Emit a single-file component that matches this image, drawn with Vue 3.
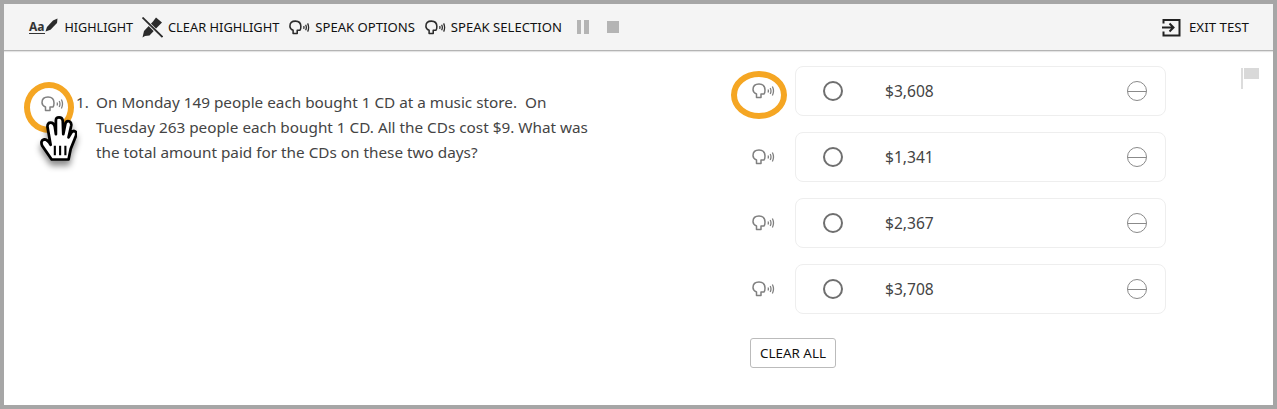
<script setup>
const tools = [
  { id: 'speak', label: 'SPEAK OPTIONS' },
  { id: 'speak', label: 'SPEAK SELECTION' },
]
const options = [
  { value: '$3,608', ring: true },
  { value: '$1,341' },
  { value: '$2,367' },
  { value: '$3,708' },
]
</script>

<template>
  <div class="frame">
    <header class="toolbar">
      <button class="tool tool-highlight">
        <span class="aa">Aa</span>
        <svg class="pen" width="13" height="15" viewBox="0 0 13 15">
          <path d="M0.5 13.5 L2 9 L8 2.5 L12.5 0.5 L12 5 L5.5 11.8 Z" fill="#2b2b2b" />
        </svg>
        HIGHLIGHT
      </button>
      <button class="tool tool-clear">
        <svg width="21" height="21" viewBox="0 0 21 21">
          <path d="M0.5 20.5 L2 14 L11 4.5 L14 0.5 L20 5.5 L16.5 9 L7.5 18.5 L3 19 Z" fill="#2b2b2b" />
          <path d="M1 1 L20 20" stroke="#f4f4f4" stroke-width="3.4" />
          <path d="M0.5 0.5 L20.5 20" stroke="#2b2b2b" stroke-width="1.8" />
        </svg>
        CLEAR HIGHLIGHT
      </button>
      <button v-for="t in tools" :key="t.label" class="tool tool-speak">
        <svg width="21" height="15" viewBox="0 0 23 16" fill="none" stroke="#2b2b2b">
          <path d="M13 7 Q13 10 12 11 H9 V14.5 H4.5 V11 Q1 9.5 1 6.5 Q1 1 7 1 Q13 1 13 7 Z" stroke-width="1.7" stroke-linejoin="round" />
          <path d="M16 6.5 Q16.8 8 16 9.5 M18.2 5 Q19.8 8 18.2 11 M20.4 3.5 Q22.6 8 20.4 12.5" stroke-width="1.4" />
        </svg>
        {{ t.label }}
      </button>
      <div class="pause"><i></i><i></i></div>
      <div class="stop"></div>
      <button class="tool tool-exit">
        <svg width="19" height="19" viewBox="0 0 19 19" fill="none" stroke="#222" stroke-width="2">
          <path d="M1.5 5.5 V2 H17.5 V17.5 H1.5 V13.5" />
          <path d="M0 9.5 H11 M7.5 5.5 L11.5 9.5 L7.5 13.5" />
        </svg>
        EXIT TEST
      </button>
    </header>

    <main class="body">
      <section class="question">
        <div class="q-speak">
          <span class="ring ring-q"></span>
          <svg class="speak-grey" width="23" height="16" viewBox="0 0 23 16" fill="none" stroke="#808080">
            <path d="M13 7 Q13 10 12 11 H9 V14.5 H4.5 V11 Q1 9.5 1 6.5 Q1 1 7 1 Q13 1 13 7 Z" stroke-width="1.5" stroke-linejoin="round" />
            <path d="M16 6.5 Q16.8 8 16 9.5 M18.2 5 Q19.8 8 18.2 11 M20.4 3.5 Q22.6 8 20.4 12.5" stroke-width="1.3" />
          </svg>
          <svg class="hand" width="38" height="51" viewBox="0 0 36 48">
            <path d="M12 42 L3 29 Q1 24 5 23 Q8 23 11 28 L8 11 Q8 7 11 7 Q14 7 15 11 L16 18 L16 5 Q16 2 19 2 Q22 2 22.5 5 L23 18 L25 8 Q26 5 29 6 Q31 7 30.5 10 L28 21 L31 16 Q33 14 35 16 Q36 18 34 22 L30 32 L28 42 Z" fill="#fff" stroke="#000" stroke-width="2.6" stroke-linejoin="round" />
            <path d="M15 29 V38 M20 29 V38 M25 29 V38" stroke="#000" stroke-width="2" />
          </svg>
        </div>
        <span class="q-num">1.</span>
        <p class="q-text">On Monday 149 people each bought 1 CD at a music store.&nbsp; On Tuesday 263 people each bought 1 CD. All the CDs cost $9. What was the total amount paid for the CDs on these two days?</p>
      </section>

      <section class="answers">
        <div v-for="o in options" :key="o.value" class="answer-row">
          <div class="a-speak">
            <span v-if="o.ring" class="ring ring-a"></span>
            <svg width="23" height="16" viewBox="0 0 23 16" fill="none" stroke="#808080">
              <path d="M13 7 Q13 10 12 11 H9 V14.5 H4.5 V11 Q1 9.5 1 6.5 Q1 1 7 1 Q13 1 13 7 Z" stroke-width="1.5" stroke-linejoin="round" />
              <path d="M16 6.5 Q16.8 8 16 9.5 M18.2 5 Q19.8 8 18.2 11 M20.4 3.5 Q22.6 8 20.4 12.5" stroke-width="1.3" />
            </svg>
          </div>
          <div class="card">
            <span class="radio"></span>
            <span class="value">{{ o.value }}</span>
            <span class="strike"></span>
          </div>
        </div>
        <button class="clear-all">CLEAR ALL</button>
      </section>

      <aside class="flag"><i></i></aside>
    </main>
  </div>
</template>

<style scoped>
.frame {
  box-sizing: border-box;
  width: 1277px;
  height: 409px;
  border: 4px solid #a6a6a6;
  background: #fff;
  font-family: "Noto Sans", sans-serif;
  color: #444;
  overflow: hidden;
}
.toolbar {
  box-sizing: border-box;
  height: 47px;
  background: #f4f4f4;
  border-bottom: 1px solid #b4b4b4;
  box-shadow: 0 1px 1px #e4e4e4;
  display: flex;
  align-items: center;
  padding-left: 25px;
  padding-right: 24px;
}
.tool {
  display: flex;
  align-items: center;
  background: none;
  border: none;
  padding: 0;
  font: inherit;
  font-size: 12.6px;
  color: #111;
  white-space: nowrap;
}
.aa {
  font-size: 12px;
  font-weight: 700;
  color: #333;
  border-bottom: 1px solid #333;
  line-height: 13px;
}
.pen { margin: -3px 7px 0 0; }
.tool-clear { margin-left: 9px; gap: 5px; font-size: 12.85px; }
.tool-speak { margin-left: 10px; gap: 5px; font-size: 13.1px; }
.pause {
  display: flex;
  gap: 3px;
  margin-left: 15px;
}
.pause i {
  width: 4.5px;
  height: 14px;
  background: #b4b4b4;
}
.stop {
  width: 12px;
  height: 12px;
  background: #b4b4b4;
  margin-left: 18px;
}
.tool-exit { margin-left: auto; gap: 8px; font-size: 13.3px; }
.body {
  display: flex;
  height: 354px;
}
.question {
  width: 747px;
  flex: none;
  display: flex;
  align-items: flex-start;
  padding-top: 39px;
  box-sizing: border-box;
  font-size: 15.3px;
  line-height: 25px;
}
.q-speak {
  position: relative;
  width: 72px;
  flex: none;
}
.speak-grey {
  position: absolute;
  left: 37px;
  top: 6px;
}
.ring {
  position: absolute;
  box-sizing: border-box;
  border: 6px solid #f5a623;
  border-radius: 50%;
}
.ring-q {
  left: 20px;
  top: -8px;
  width: 50px;
  height: 51px;
}
.ring-a {
  left: -21px;
  top: -5px;
  width: 56px;
  height: 48px;
}
.hand {
  position: absolute;
  left: 35px;
  top: 25px;
  filter: drop-shadow(0 5px 3px rgba(0, 0, 0, .45));
}
.q-num { width: 20px; flex: none; }
.q-text {
  margin: 0;
  width: 510px;
}
.answers {
  width: 415px;
  padding-top: 15px;
  box-sizing: border-box;
  flex: none;
}
.answer-row {
  display: flex;
  align-items: center;
  height: 50px;
  margin-bottom: 16px;
  white-space: nowrap;
}
.a-speak {
  position: relative;
  flex: none;
  width: 25px;
  margin-left: 1px;
  margin-right: 18px;
  height: 30px;
  display: flex;
  align-items: center;
}
.card {
  box-sizing: border-box;
  flex: none;
  width: 371px;
  height: 50px;
  border: 1px solid #eee;
  border-radius: 8px;
  display: flex;
  align-items: center;
  padding-left: 27px;
  padding-right: 18px;
  font-size: 15.6px;
  color: #444;
}
.radio {
  box-sizing: border-box;
  width: 20px;
  height: 20px;
  border: 2px solid #6f6f6f;
  border-radius: 50%;
  flex: none;
}
.value { margin-left: 42px; flex: 1; }
.strike {
  box-sizing: border-box;
  width: 20px;
  height: 20px;
  border: 1.5px solid #8a8a8a;
  border-radius: 50%;
  background: linear-gradient(#8a8a8a, #8a8a8a) center / 100% 1px no-repeat;
}
.clear-all {
  box-sizing: border-box;
  display: block;
  width: 86px;
  height: 30px;
  margin-top: 24px;
  margin-left: -1px;
  padding: 0;
  background: #fff;
  border: 1px solid #bbb;
  border-radius: 3px;
  font: inherit;
  font-size: 13.4px;
  color: #111;
}
.flag {
  flex: none;
  width: 20px;
  margin-left: 75px;
  margin-top: 17px;
  height: 21px;
  border-left: 2px solid #dcdcdc;
}
.flag i {
  display: block;
  width: 15px;
  height: 11px;
  margin-left: 1px;
  background: #d9d9d9;
}
</style>

<style>
html, body { margin: 0; background: #fff; }
</style>
